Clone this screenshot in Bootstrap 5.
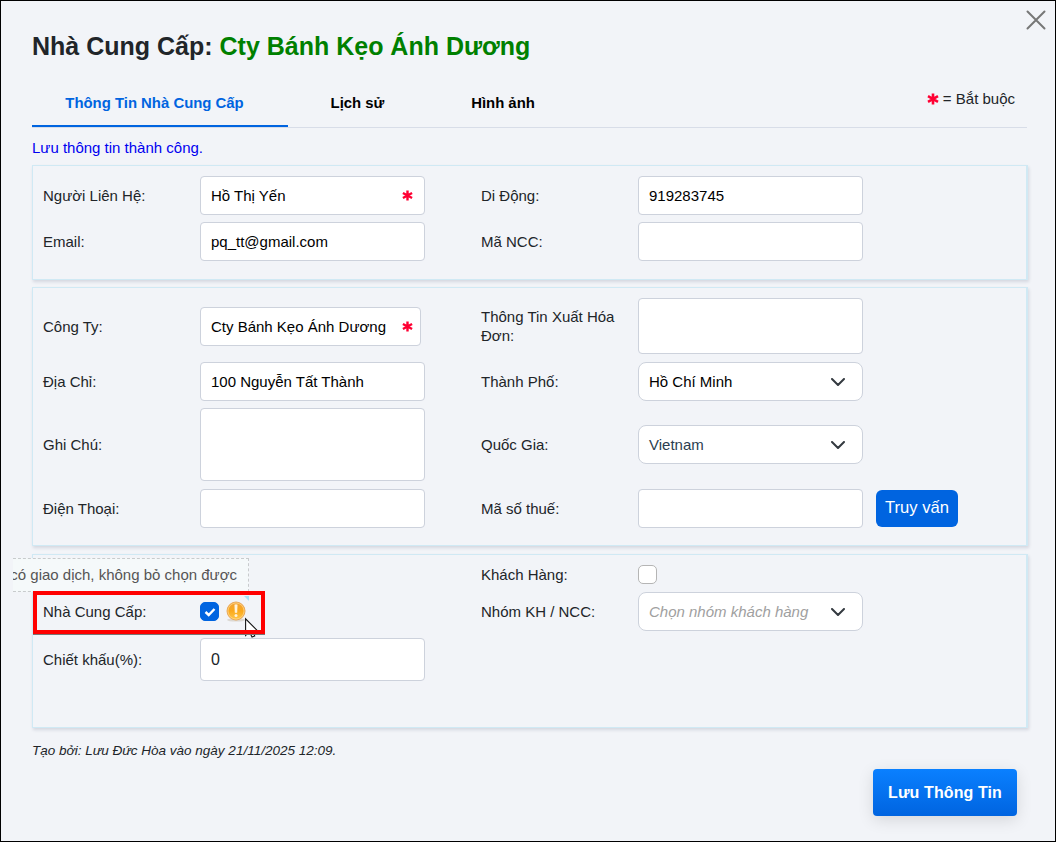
<!DOCTYPE html>
<html lang="vi">
<head>
<meta charset="utf-8">
<title>Nhà Cung Cấp</title>
<link href="https://cdn.jsdelivr.net/npm/bootstrap@5.3.0/dist/css/bootstrap.min.css" rel="stylesheet">
<style>
  body { font-family: "Liberation Sans", Arial, sans-serif; font-size: 15px; line-height: 19px; color: #212529; background: #f2f4f8; }
  .dialog-box { width: 1056px; height: 842px; border: 1px solid #000; padding: 29px 27px 0 31px; overflow: hidden; }
  .dialog-title { font-size: 25px; font-weight: 700; line-height: 32px; }
  .dialog-title span { color: #008000; }
  .close-x { top: 9px; right: 9px; width: 20px; height: 20px; }
  .tab-bar { width: 995px; height: 50px; margin-top: 16px; border-bottom: 1px solid #d8dde8; }
  .tab-bar .nav-link { height: 49px; padding: 15px 0 0; border-radius: 0; color: #000; font-weight: 700; font-size: 14.9px; line-height: 20px; text-align: center; }
  .tab-bar .nav-link.active { color: #0064e0; background: none; border-bottom: 2px solid #0064e0; padding-right: 11px; }
  .tab-main { width: 256px; } .tab-log { width: 139px; } .tab-img { width: 152px; }
  .need-note { margin: 11px 12px 0 auto; }
  .saved-msg { color: #0000f0; margin-top: 10px; }
  .panel { width: 996px; border: 1px solid #d0e9f4; border-right-width: 2px; box-shadow: 1px 2px 3px rgba(60,70,100,.16); padding: 10px; display: grid; grid-template-columns: 157px 281px 157px 1fr; column-gap: 0; row-gap: 7px; align-items: center; align-content: start; }
  .panel-contact { height: 115px; margin-top: 8px; }
  .panel-company { height: 259px; margin-top: 7px; grid-template-rows: 57px 39px 73px 41px; }
  .panel-kind { height: 174px; margin-top: 8px; grid-template-rows: 20px 39px 43px; }
  .panel .form-control, .panel .form-select { width: 225px; height: 39px; padding: 0 10px; font-size: 15px; line-height: 19px; border: 1px solid #cdd2dc; border-radius: 4px; color: #000; background-color: #fff; resize: none; }
  .panel .form-select { border-radius: 8px; background-image: none; padding-right: 17px; }
  .mandatory { right: 12px; top: 50%; margin-top: -6px; }
  .chk { width: 19px; height: 19px; border: 1px solid #b5b5b5; border-radius: 5px; background: #fff; }
  .chk.on { background: #0064e0; border-color: #0064e0; }
  .btn-query { width: 82px; height: 37px; background: #0064e0; border-radius: 6px; color: #fff; font-size: 16.6px; line-height: 24px; padding: 0 0 2px; margin-left: 13px; border: 0; }
  .btn-save { width: 144px; height: 47px; border: 0; border-radius: 4px; background: linear-gradient(#0a80ff, #0064e0); box-shadow: 0 4px 16px rgba(0,0,0,.12); color: #fff; font-size: 16px; font-weight: 700; letter-spacing: .1px; padding: 1px 0 0; margin: 9px 11px 0 0; }
  .made-by { font-size: 13.5px; line-height: 18px; margin-top: 14px; }
  .hint { left: -20px; top: 3px; width: 236px; height: 34px; border: 1px dashed #c8cbcd; border-left: 0; background: #f5f9fa; color: #555; line-height: 32px; overflow: hidden; padding-right: 11px; white-space: nowrap; }
  .marker { left: 0; top: 36px; width: 232px; height: 43px; border: 4px solid #f00; box-shadow: 0 1px 0 #777; }
  .tail { left: 211px; top: 41px; width: 5px; height: 5px; }
  .pointer { left: 211px; top: 62px; }
</style>
</head>
<body>
<svg class="d-none"><defs>
  <symbol id="star" viewBox="0 0 12 12"><path d="M6 .5V11.5M1 3.2 11 8.8M11 3.2 1 8.8" stroke="#ff0033" stroke-width="2.6" fill="none"/></symbol>
  <symbol id="chev" viewBox="0 0 14 8"><path d="M1 1 7 7 13 1" stroke="#343a40" stroke-width="2" fill="none" stroke-linecap="round" stroke-linejoin="round"/></symbol>
</defs></svg>
<main class="dialog-box position-relative">
  <svg class="close-x position-absolute" viewBox="0 0 20 20"><path d="M1.5 1.5 18.5 18.5M18.5 1.5 1.5 18.5" stroke="#777" stroke-width="2" stroke-linecap="round"/></svg>
  <h1 class="dialog-title m-0">Nhà Cung Cấp: <span>Cty Bánh Kẹo Ánh Dương</span></h1>
  <nav class="tab-bar nav d-flex flex-nowrap">
    <a class="nav-link active tab-main">Thông Tin Nhà Cung Cấp</a>
    <a class="nav-link tab-log">Lịch sử</a>
    <a class="nav-link tab-img">Hình ảnh</a>
    <div class="need-note"><svg width="12" height="12" style="vertical-align:-1px"><use href="#star"/></svg> = Bắt buộc</div>
  </nav>
  <div class="saved-msg">Lưu thông tin thành công.</div>

  <section class="panel panel-contact">
    <label>Người Liên Hệ:</label>
    <div class="position-relative" style="width:225px"><input class="form-control" value="Hồ Thị Yến"><svg class="mandatory position-absolute" width="11" height="11"><use href="#star"/></svg></div>
    <label>Di Động:</label><input class="form-control" value="919283745">
    <label>Email:</label><input class="form-control" value="pq_tt@gmail.com">
    <label>Mã NCC:</label><input class="form-control">
  </section>

  <section class="panel panel-company">
    <label>Công Ty:</label>
    <div class="position-relative" style="width:225px"><input class="form-control" style="width:221px" value="Cty Bánh Kẹo Ánh Dương"><svg class="mandatory position-absolute" width="11" height="11"><use href="#star"/></svg></div>
    <label class="align-self-start mt-2 pt-1 lh-sm" style="line-height:19px!important;margin-top:5px!important">Thông Tin Xuất Hóa Đơn:</label><textarea class="form-control align-self-start" style="height:56px"></textarea>
    <label>Địa Chỉ:</label><input class="form-control" value="100 Nguyễn Tất Thành">
    <label>Thành Phố:</label>
    <div class="form-select d-flex align-items-center justify-content-between">Hồ Chí Minh<svg width="14" height="8"><use href="#chev"/></svg></div>
    <label>Ghi Chú:</label><textarea class="form-control" style="height:73px"></textarea>
    <label>Quốc Gia:</label>
    <div class="form-select d-flex align-items-center justify-content-between" style="color:#2c3e50">Vietnam<svg width="14" height="8"><use href="#chev"/></svg></div>
    <label>Điện Thoại:</label><input class="form-control">
    <label>Mã số thuế:</label>
    <div class="d-flex align-items-center"><input class="form-control"><button class="btn btn-query flex-shrink-0">Truy vấn</button></div>
  </section>

  <section class="panel panel-kind position-relative">
    <span></span><span></span>
    <label class="align-self-start">Khách Hàng:</label><span class="chk align-self-start"></span>
    <label>Nhà Cung Cấp:</label>
    <div class="d-flex align-items-center">
      <span class="chk on d-flex align-items-center justify-content-center"><svg width="12" height="10" viewBox="0 0 12 10"><path d="M1.5 5 4.7 8 10.5 2" stroke="#fff" stroke-width="2.4" fill="none"/></svg></span>
      <svg style="margin-left:7px" width="20" height="21" viewBox="0 0 20 21">
        <defs><linearGradient id="amber" x2="0" y2="1"><stop stop-color="#f0a23a"/><stop offset=".5" stop-color="#fba91c"/><stop offset="1" stop-color="#ffc94c"/></linearGradient></defs>
        <ellipse cx="10" cy="19" rx="9" ry="1.6" fill="#dcd8d2"/>
        <circle cx="10" cy="10" r="9" fill="url(#amber)" stroke="#e8a85c"/>
        <circle cx="10" cy="10" r="8" fill="none" stroke="#ffd486" stroke-width=".8"/>
        <path d="M8.8 3.8h2.4L10.9 11.5H9.1z" fill="#fff3dc" stroke="#fff3dc" stroke-width=".6"/><circle cx="10" cy="14.4" r="1.5" fill="#fff3dc"/>
      </svg>
    </div>
    <label>Nhóm KH / NCC:</label>
    <div class="form-select d-flex align-items-center justify-content-between fst-italic" style="color:#a0a0a0">Chọn nhóm khách hàng<svg width="14" height="8"><use href="#chev"/></svg></div>
    <label>Chiết khấu(%):</label><input class="form-control" style="height:43px;font-size:16px;color:#212529" value="0">
    <div class="hint position-absolute d-flex justify-content-end">có giao dịch, không bỏ chọn được</div>
    <svg class="pointer position-absolute" width="15" height="22" viewBox="0 0 14 20"><path d="M1.5 1.5V17L5 13.5 7.5 18.5 10 17.5 8 12.5H12.5z" fill="#fff" stroke="#111"/></svg>
    <div class="marker position-absolute"></div>
    <svg class="tail position-absolute" viewBox="0 0 5 5"><path d="M0 0H5V5z" fill="#a5e3fa"/></svg>
  </section>

  <div class="made-by fst-italic">Tạo bởi: Lưu Đức Hòa vào ngày 21/11/2025 12:09.</div>
  <div class="d-flex justify-content-end"><button class="btn btn-save">Lưu Thông Tin</button></div>
</main>
<script src="https://cdn.jsdelivr.net/npm/bootstrap@5.3.0/dist/js/bootstrap.bundle.min.js"></script>
</body>
</html>
